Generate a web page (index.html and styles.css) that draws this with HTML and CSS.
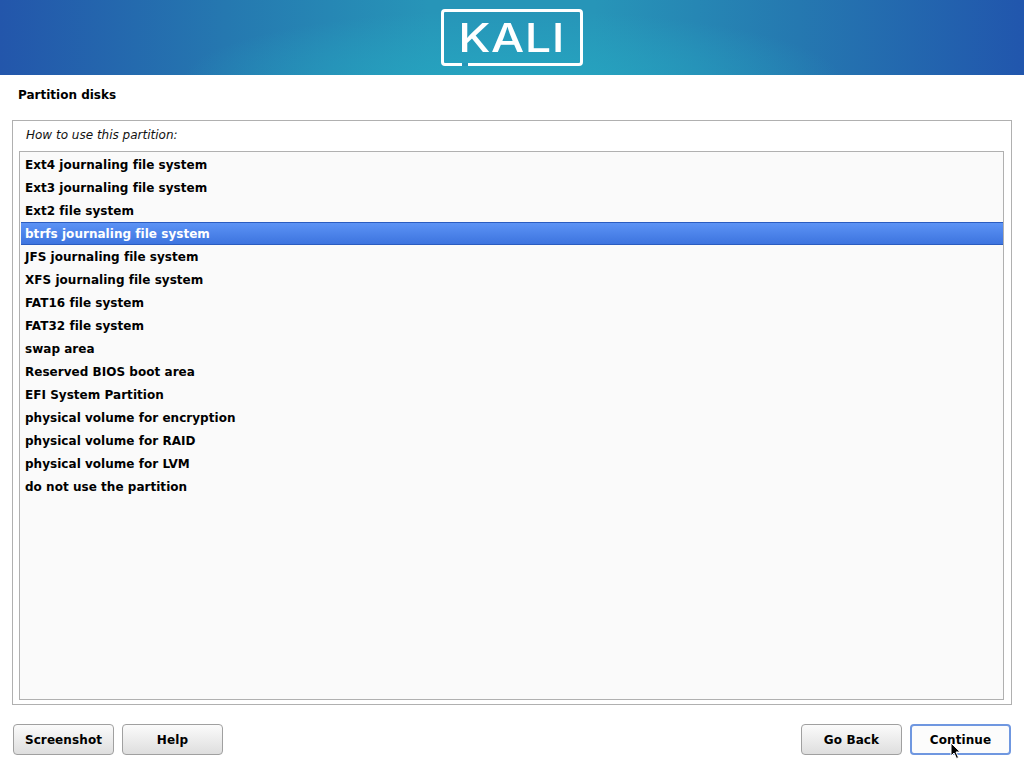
FILE: index.html
```html
<!DOCTYPE html>
<html lang="en">
<head>
<meta charset="utf-8">
<title>Partition disks</title>
<link rel="stylesheet" href="styles.css">
</head>
<body>
<div class="page">
  <header class="banner">
    <div class="logo"><span class="logo-text">KALI</span><span class="logo-gap"></span></div>
  </header>
  <h1 class="title">Partition disks</h1>
  <main class="frame">
    <p class="prompt">How to use this partition:</p>
    <ul class="list">
      <li>Ext4 journaling file system</li>
      <li>Ext3 journaling file system</li>
      <li>Ext2 file system</li>
      <li class="selected">btrfs journaling file system</li>
      <li>JFS journaling file system</li>
      <li>XFS journaling file system</li>
      <li>FAT16 file system</li>
      <li>FAT32 file system</li>
      <li>swap area</li>
      <li>Reserved BIOS boot area</li>
      <li>EFI System Partition</li>
      <li>physical volume for encryption</li>
      <li>physical volume for RAID</li>
      <li>physical volume for LVM</li>
      <li>do not use the partition</li>
    </ul>
  </main>
  <footer class="actions">
    <div class="group">
      <button class="btn">Screenshot</button>
      <button class="btn">Help</button>
    </div>
    <div class="group">
      <button class="btn">Go Back</button>
      <button class="btn focus">Continue</button>
    </div>
  </footer>
  <svg class="cursor" width="12" height="18" viewBox="0 0 12 18"><path d="M1 1v13l3-3 2.500 5.500 2-1L6 10h4.200z" fill="#000" stroke="#fff" stroke-width="1"/></svg>
</div>
</body>
</html>
```
FILE: styles.css
```css
* { box-sizing: border-box; }
html, body { margin: 0; padding: 0; background: #fff; }
body { font-family: "DejaVu Sans", sans-serif; font-size: 12px; color: #000; }
.page { position: relative; width: 1024px; height: 768px; overflow: hidden; display: flex; flex-direction: column; }
.banner {
  height: 75px; flex: none; display: flex; justify-content: center; padding-top: 9px;
  background:
    radial-gradient(ellipse 330px 70px at 512px 80px, #26a5c0 0%, rgba(38,165,192,0) 100%),
    linear-gradient(90deg, #2356ab 0%, #2578b0 22%, #2795b8 42%, #2795b8 58%, #2578b0 78%, #2156ad 100%);
}
.logo {
  position: relative; width: 142px; height: 57px; border: 3px solid #fff; border-radius: 4px;
  display: flex; justify-content: center; align-items: center; filter: blur(0.5px);
}
.logo-text { font-family: "Inter", sans-serif; font-size: 40px; line-height: 1; color: #fff; letter-spacing: 0.500px; font-weight: 500; transform: scaleX(1.170); }
.logo-gap { position: absolute; left: 18px; bottom: -3px; width: 6px; height: 3px; background: #2596b8; }
.title { margin: 0; height: 45px; padding: 12px 0 0 18px; font-size: 12px; font-weight: 700; line-height: 16px; }
.frame { margin: 0 12px; height: 585px; flex: none; border: 1px solid #b0b0b0; padding: 0 7px 4px 6px; display: flex; flex-direction: column; }
.prompt { margin: 0; height: 30px; padding: 6px 0 0 7px; font-style: oblique; font-size: 12px; line-height: 16px; color: #111; }
.list { margin: 0; padding: 1px 0 0 1px; list-style: none; flex: 1; border: 1px solid #b0b0b0; background: #fafafa; }
.list li { height: 23px; padding: 1px 0 0 4px; line-height: 23px; font-weight: 700; letter-spacing: 0.030px; white-space: nowrap; }
.list li.selected { color: #fff; background: linear-gradient(#5c93f5, #3d74df); border-top: 1px solid #2a5cc0; border-bottom: 1px solid #2a5cc0; line-height: 21px; }
.actions { display: flex; justify-content: space-between; padding: 19px 13px 0 13px; }
.group { display: flex; gap: 8px; }
.btn {
  width: 101px; height: 31px; padding: 0; border: 1px solid #a0a0a0; border-radius: 4px;
  background: linear-gradient(#fbfbfb, #dedede); font-family: inherit; font-size: 12px; font-weight: 700; letter-spacing: 0.100px; color: #000;
}
.btn.focus { border: 2px solid #6f97e0; background: #fcfcfc; }
.cursor { position: absolute; left: 950px; top: 742px; }
```
